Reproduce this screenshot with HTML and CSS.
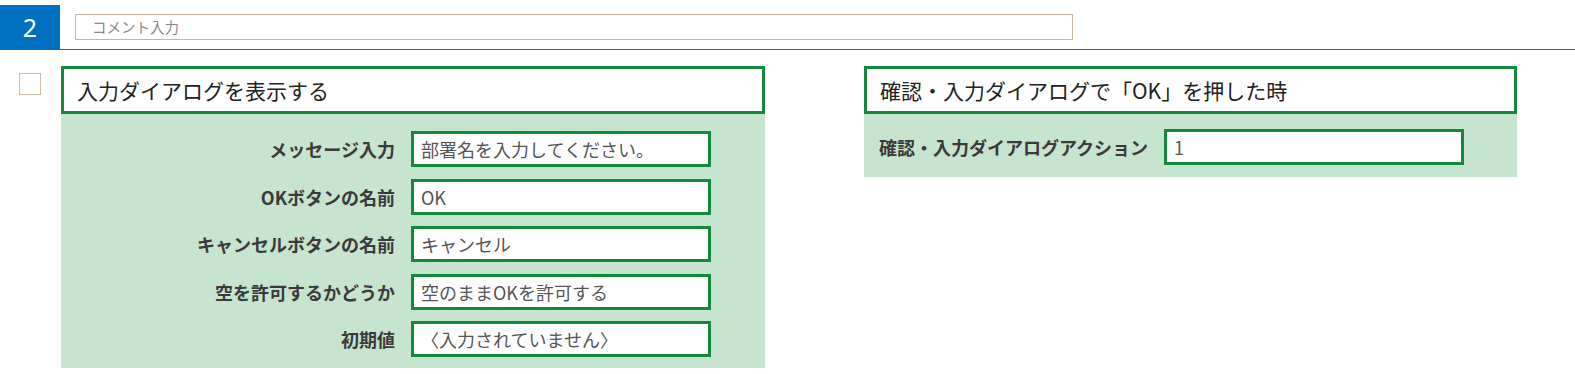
FILE: index.html
```html
<!DOCTYPE html>
<html lang="ja">
	<head>
		<meta charset="UTF-8" />
		<meta name="viewport" content="width=device-width, initial-scale=1.0" />
		<title>Step 2</title>
		<link rel="stylesheet" href="styles.css">
	</head>
	<body>
		<div class="topbar">
			<div class="step-no">2</div>
			<div class="comment">コメント入力</div>
		</div>

		<div class="content">
			<div class="check"></div>

			<div class="panel panel-left">
				<div class="panel-head">入力ダイアログを表示する</div>
				<div class="panel-body form-grid">
					<div class="label">メッセージ入力</div>
					<div class="field">部署名を入力してください。</div>

					<div class="label">OKボタンの名前</div>
					<div class="field">OK</div>

					<div class="label">キャンセルボタンの名前</div>
					<div class="field">キャンセル</div>

					<div class="label">空を許可するかどうか</div>
					<div class="field">空のままOKを許可する</div>

					<div class="label">初期値</div>
					<div class="field">〈入力されていません〉</div>
				</div>
			</div>

			<div class="panel panel-right">
				<div class="panel-head">確認・入力ダイアログで「OK」を押した時</div>
				<div class="panel-body form-row">
					<div class="label">確認・入力ダイアログアクション</div>
					<div class="field">1</div>
				</div>
			</div>
		</div>
	</body>
</html>
```

FILE: styles.css
```css
body {
	margin: 0;
	padding: 0;
	background-color: #fff;
	font-family: "Noto Sans CJK JP", "Noto Sans", sans-serif;
	color: #333;
}
.topbar {
	display: flex;
	height: 44px;
	padding-top: 5px;
	border-bottom: 1px solid #1f6aa0;
}
.step-no {
	width: 60px;
	background-color: #0070c0;
	color: #fff;
	font-family: "Noto Sans", sans-serif;
	font-size: 25px;
	line-height: 44px;
	text-align: center;
}
.comment {
	box-sizing: border-box;
	width: 998px;
	height: 26px;
	margin: 9px 0 0 15px;
	padding-left: 16px;
	border: 1px solid #c9b59c;
	color: #888;
	font-size: 14.5px;
	line-height: 24px;
}
.content {
	display: flex;
	align-items: flex-start;
	padding-top: 16px;
}
.check {
	box-sizing: border-box;
	width: 22px;
	height: 22px;
	margin: 7px 0 0 19px;
	border: 1px solid #cdbba3;
	background-color: #fff;
}
.panel {
	background-color: #c5e5cf;
}
.panel-left {
	width: 704px;
	margin-left: 20px;
}
.panel-right {
	width: 653px;
	margin-left: 99px;
}
.panel-head {
	box-sizing: border-box;
	height: 48px;
	padding-left: 13px;
	border: 3px solid #14893d;
	background-color: #fff;
	color: #222;
	font-size: 21px;
	line-height: 42px;
}
.form-grid {
	display: grid;
	grid-template-columns: 334px 300px;
	column-gap: 16px;
	row-gap: 11.6px;
	align-items: center;
	padding: 17px 0 11px;
}
.form-row {
	display: flex;
	align-items: center;
	gap: 16px;
	padding: 15px 0 12px 15px;
}
.label {
	text-align: right;
	font-size: 18px;
	font-weight: bold;
	color: #3a3a3a;
}
.field {
	box-sizing: border-box;
	width: 300px;
	height: 36px;
	padding-left: 7px;
	border: 3px solid #14893d;
	background-color: #fff;
	color: #555;
	font-size: 18px;
	line-height: 30px;
}
```
